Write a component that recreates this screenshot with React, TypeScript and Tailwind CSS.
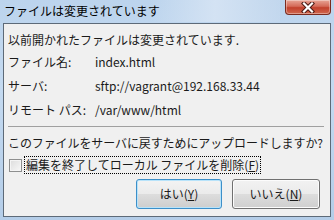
import React from "react";

const font = { fontFamily: '"Noto Sans CJK JP", "Noto Sans", sans-serif' };

function CloseButton() {
  return (
    <div className="absolute top-0 left-[285px] w-[46px] h-[15px] rounded-b-[4px] border border-t-0 border-[#7a2a1e] bg-[linear-gradient(to_bottom,#e8a596_0%,#d46a58_45%,#c2402c_55%,#d0684f_100%)] flex items-center justify-center shadow-[inset_0_0_0_1px_rgba(255,255,255,0.35)]">
      <svg width="14" height="11" viewBox="0 0 14 11">
        <path
          d="M3 1.5 L11 9.5 M11 1.5 L3 9.5"
          stroke="#4a1a14"
          strokeWidth="4.2"
          strokeLinecap="square"
        />
        <path
          d="M3 1.5 L11 9.5 M11 1.5 L3 9.5"
          stroke="#ffffff"
          strokeWidth="2.2"
          strokeLinecap="square"
        />
      </svg>
    </div>
  );
}

function Row({ label, value, mt }: { label: string; value: string; mt: string }) {
  return (
    <div className={`flex h-[20px] items-center whitespace-nowrap ${mt}`}>
      <div className="w-[87px] shrink-0">{label}</div>
      <div>{value}</div>
    </div>
  );
}

export default function App() {
  return (
    <div
      className="relative w-[334px] h-[220px] overflow-hidden bg-[linear-gradient(to_bottom,#bcd4ed_0%,#c4daf1_40%,#b4cde8_100%)] text-[12px] text-[#1a1a1a]"
      style={font}
    >
      <div className="absolute top-0 left-[150px] w-[130px] h-[22px] bg-[linear-gradient(to_right,rgba(220,232,245,0),rgba(214,228,244,0.9),rgba(200,218,238,0.5))]" />
      <div className="relative h-[23px] flex items-center pl-[4px] text-[12px] text-black pb-[1px] whitespace-nowrap">
        ファイルは変更されています
      </div>
      <CloseButton />
      <div className="ml-[3px] w-[328px] h-[194px] border border-[#5d6a78] bg-[#f0f0f0] flex flex-col pl-[4px] pr-[5px]">
        <div className="h-[20px] mt-[6px] flex items-center whitespace-nowrap">以前開かれたファイルは変更されています.</div>
        <Row label="ファイル名:" value="index.html" mt="mt-[2px]" />
        <Row label="サーバ:" value="sftp://vagrant@192.168.33.44" mt="mt-[4px]" />
        <Row label="リモート パス:" value="/var/www/html" mt="mt-[4px]" />
        <div className="mt-[6px] h-[2px] border-t border-[#a0a0a0] border-b-white mr-[1px]" />
        <div className="h-[20px] mt-[5px] flex items-center whitespace-nowrap tracking-[-0.1px] -mr-[4px]">このファイルをサーバに戻すためにアップロードしますか?</div>
        <div className="flex items-center mt-[3px] h-[18px] whitespace-nowrap">
          <div className="w-[13px] h-[13px] border border-[#8e8f8f] bg-[linear-gradient(135deg,#dcdcdc,#f8f8f8)] shadow-[inset_0_0_0_1px_#f4f4f4] shrink-0 ml-[1px]" />
          <div className="ml-[2px] h-[18px] flex items-center border border-dotted border-black px-[1px]">
            編集を終了してローカル ファイルを削除(<span className="underline">F</span>)
          </div>
        </div>
        <div className="flex justify-end gap-[10px] mt-[5px] pr-[5px] whitespace-nowrap">
          <div className="w-[86px] h-[30px] rounded-[3px] border border-[#3c8fc9] bg-[linear-gradient(to_bottom,#eaf6fd_0%,#d9f0fc_50%,#bee6fd_51%,#a7d9f5_100%)] shadow-[inset_0_0_0_1px_#b8e3fa] flex items-center justify-center">
            <div className="w-[82px] h-[26px] rounded-[2px] bg-[linear-gradient(to_bottom,#f2f2f2_0%,#ebebeb_50%,#dddddd_51%,#cfcfcf_100%)] flex items-center justify-center">
              はい(<span className="underline">Y</span>)
            </div>
          </div>
          <div className="w-[88px] h-[30px] rounded-[3px] border border-[#707070] bg-[linear-gradient(to_bottom,#f2f2f2_0%,#ebebeb_50%,#dddddd_51%,#cfcfcf_100%)] shadow-[inset_0_0_0_1px_#fcfcfc] flex items-center justify-center">
            いいえ(<span className="underline">N</span>)
          </div>
        </div>
      </div>
    </div>
  );
}
